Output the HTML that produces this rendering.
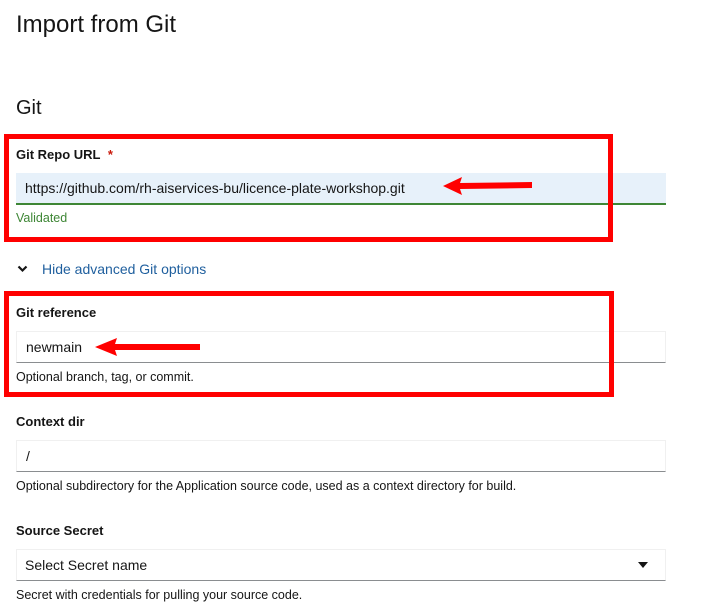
<!DOCTYPE html>
<html><head><style>
body{margin:0;width:708px;height:610px;background:#fff;font-family:"Liberation Sans",sans-serif;color:#151515;position:relative;overflow:hidden}
.a{position:absolute;white-space:nowrap}
.lbl{font-size:13px;font-weight:bold;left:16px}
.help{font-size:12.5px;left:16px}
.inp{position:absolute;left:16px;width:650px;height:32px;box-sizing:border-box;border:1px solid #f0f0f0;border-bottom:1px solid #8a8d90;font-size:14px;line-height:30px;padding-left:9px}
.box{position:absolute;border:5px solid #f00;box-sizing:border-box}
</style></head><body>
<div class="a" style="left:16px;top:11px;font-size:24px">Import from Git</div>
<div class="a" style="left:16px;top:97px;font-size:20px">Git</div>

<div class="a lbl" style="top:147px">Git Repo URL <span style="color:#c9190b;margin-left:4px">*</span></div>
<div class="inp" style="top:173px;background:#e7f1fa;border:none;border-bottom:2px solid #3e8635;line-height:30px;padding-left:9px">https://github.com/rh-aiservices-bu/licence-plate-workshop.git</div>
<div class="a" style="left:16px;top:211px;font-size:12.5px;color:#3e8635">Validated</div>
<div class="box" style="left:4px;top:134px;width:609px;height:108px"></div>
<svg class="a" style="left:440px;top:176px" width="95" height="20"><polygon points="3,10 22,1 20,7 92,6 92,12 20,13 22,19" fill="#f00"/></svg>

<svg class="a" style="left:17px;top:264px" width="11" height="10"><path d="M1.5 2.5 L5.5 6.5 L9.5 2.5" stroke="#151515" stroke-width="2.2" fill="none"/></svg>
<div class="a" style="left:42px;top:261px;font-size:14px;color:#1f5f9e">Hide advanced Git options</div>

<div class="a lbl" style="top:305px">Git reference</div>
<div class="inp" style="top:331px">newmain</div>
<div class="a help" style="top:370px">Optional branch, tag, or commit.</div>
<div class="box" style="left:4px;top:291px;width:610px;height:106px"></div>
<svg class="a" style="left:92px;top:337px" width="112" height="20"><polygon points="3,10 25,1 23,7 108,7 108,13 23,13 25,19" fill="#f00"/></svg>

<div class="a lbl" style="top:414px">Context dir</div>
<div class="inp" style="top:440px">/</div>
<div class="a help" style="top:479px">Optional subdirectory for the Application source code, used as a context directory for build.</div>

<div class="a lbl" style="top:523px">Source Secret</div>
<div class="inp" style="top:549px;padding-left:8px">Select Secret name</div>
<svg class="a" style="left:638px;top:562px" width="10" height="6"><polygon points="0,0 10,0 5,6" fill="#151515"/></svg>
<div class="a help" style="top:588px">Secret with credentials for pulling your source code.</div>
</body></html>
